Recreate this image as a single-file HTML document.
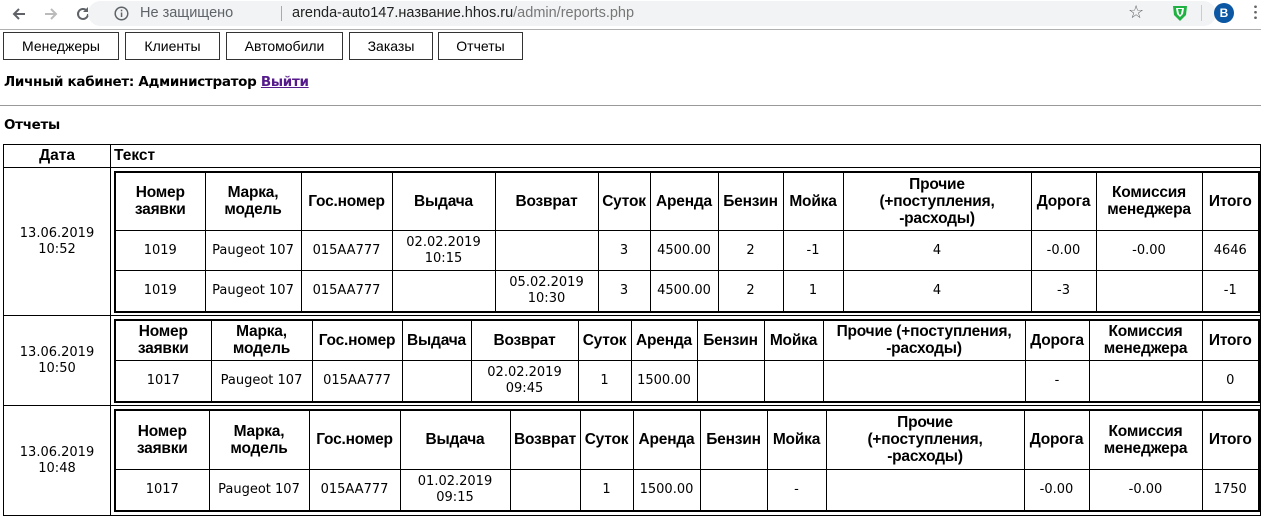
<!DOCTYPE html>
<html><head><meta charset="utf-8"><style>
*{box-sizing:border-box}
body{margin:0;width:1261px;height:514px;overflow:hidden;background:#fff;font-family:"DejaVu Sans",Verdana,sans-serif;color:#000;position:relative}
.bar{position:absolute;left:0;top:0;width:1261px;height:30px;background:#fff;border-bottom:1px solid #b0b0b0}
.url{position:absolute;left:88px;top:1px;width:1128px;height:25px;background:#f1f3f4;border-radius:13px;font-family:"Liberation Sans",sans-serif;font-size:14.5px;line-height:25px;color:#222}
.ab{position:absolute;font-family:"Liberation Sans",sans-serif}
.btn{position:absolute;top:32px;height:28px;border:1px solid #333;background:#fff;font-family:"Liberation Sans",sans-serif;font-size:14px;line-height:26px;text-align:center}
.t{position:absolute;font-family:"DejaVu Sans",sans-serif;font-weight:bold;font-size:13.5px;letter-spacing:-0.3px}
table{border-collapse:collapse;table-layout:fixed}
.outer{position:absolute;left:3px;top:144px;width:1258px;border:1px solid #000}
.outer>tbody>tr>td,.outer>tbody>tr>th{border:1px solid #000;padding:0}
.outer th{font-family:"Liberation Sans",sans-serif;font-size:15.5px;font-weight:bold;height:23px}
.dt{text-align:center;font-size:13px;line-height:16px}
.in{width:1144px;margin:2px 3px 2px 3px;border:2px solid #000}
.in td,.in th{border:1px solid #000;text-align:center;padding:0;font-size:13px;line-height:16px}
.in th{font-family:"Liberation Sans",sans-serif;font-size:15.5px;line-height:17px;font-weight:bold;height:auto;letter-spacing:-0.2px}
</style></head><body>
<div class="bar">
<svg class="ab" style="left:11px;top:6px" width="16" height="16" viewBox="0 0 16 16"><path d="M14 8H3M8 3L3 8l5 5" fill="none" stroke="#5f6368" stroke-width="2"/></svg>
<svg class="ab" style="left:43px;top:6px" width="16" height="16" viewBox="0 0 16 16"><path d="M2 8h11M8 3l5 5-5 5" fill="none" stroke="#bbb" stroke-width="2"/></svg>
<svg class="ab" style="left:74px;top:5px" width="18" height="18" viewBox="0 0 18 18"><path d="M14 9a5 5 0 1 1-1.5-3.6" fill="none" stroke="#5f6368" stroke-width="2"/><path d="M14 2v5h-5z" fill="#5f6368"/></svg>
<div class="url"><svg style="position:absolute;left:26px;top:5px" width="15" height="15"><circle cx="7.5" cy="7.5" r="6.3" fill="none" stroke="#5f6368" stroke-width="1.5"/><rect x="6.8" y="6.5" width="1.5" height="4.5" fill="#5f6368"/><rect x="6.8" y="3.7" width="1.5" height="1.6" fill="#5f6368"/></svg><span style="position:absolute;left:52px;color:#5f6368">Не защищено</span><span style="position:absolute;left:193px;top:5px;width:1px;height:15px;background:#aaa"></span><span style="position:absolute;left:204px">arenda-auto147.название.hhos.ru<span style="color:#777">/admin/reports.php</span></span><span style="position:absolute;left:1040px;top:-1px;font-size:18px;color:#5f6368">☆</span></div>
<svg class="ab" style="left:1172px;top:4px" width="16" height="18" viewBox="0 0 16 18"><path d="M1 2h14l-1 9-6 6-6-6z" fill="#1fb141"/><path d="M4 4h8l-1 6-3 3-3-3z" fill="#fff"/><path d="M6 5h4l-1 5-1 1-1-1z" fill="#1fb141"/></svg>
<div class="ab" style="left:1201px;top:5px;width:1px;height:16px;background:#ccc"></div>
<div class="ab" style="left:1214px;top:3px;width:20px;height:20px;border-radius:50%;background:#0b57a4;color:#fff;font-size:12px;line-height:20px;text-align:center;font-weight:bold">B</div>
<div class="ab" style="left:1254px;top:4px;width:3px;height:16px;background:radial-gradient(circle,#666 1.2px,transparent 1.5px) 0 0/3px 5.5px"></div>
</div>
<div class="btn" style="left:3px;width:116px">Менеджеры</div>
<div class="btn" style="left:125px;width:95px">Клиенты</div>
<div class="btn" style="left:226px;width:117px">Автомобили</div>
<div class="btn" style="left:349px;width:84px">Заказы</div>
<div class="btn" style="left:438px;width:85px">Отчеты</div>
<div class="t" style="left:4px;top:74px">Личный кабинет: Администратор <span style="color:#551a8b;text-decoration:underline">Выйти</span></div>
<div style="position:absolute;left:0;top:105px;width:1261px;height:1px;background:#999"></div>
<div class="t" style="left:4px;top:117px">Отчеты</div>
<table class="outer"><colgroup><col style="width:107px"><col></colgroup><tbody>
<tr><th>Дата</th><th style="text-align:left;padding-left:3px">Текст</th></tr>
<tr style="height:148px"><td class="dt">13.06.2019<br>10:52</td><td>
<table class="in"><colgroup><col style="width:90px"><col style="width:96px"><col style="width:91px"><col style="width:103px"><col style="width:103px"><col style="width:52px"><col style="width:68px"><col style="width:65px"><col style="width:60px"><col style="width:188px"><col style="width:65px"><col style="width:106px"><col style="width:57px"></colgroup>
<tr style="height:59px"><th>Номер<br>заявки</th><th>Марка,<br>модель</th><th>Гос.номер</th><th>Выдача</th><th>Возврат</th><th>Суток</th><th>Аренда</th><th>Бензин</th><th>Мойка</th><th>Прочие<br>(+поступления,<br>-расходы)</th><th>Дорога</th><th>Комиссия<br>менеджера</th><th>Итого</th></tr>
<tr style="height:40px"><td>1019</td><td>Paugeot 107</td><td>015AA777</td><td>02.02.2019<br>10:15</td><td></td><td>3</td><td>4500.00</td><td>2</td><td>-1</td><td>4</td><td>-0.00</td><td>-0.00</td><td>4646</td></tr>
<tr style="height:41px"><td>1019</td><td>Paugeot 107</td><td>015AA777</td><td></td><td>05.02.2019<br>10:30</td><td>3</td><td>4500.00</td><td>2</td><td>1</td><td>4</td><td>-3</td><td></td><td>-1</td></tr>
</table></td></tr>
<tr style="height:90px"><td class="dt">13.06.2019<br>10:50</td><td>
<table class="in"><colgroup><col style="width:96px"><col style="width:101px"><col style="width:90px"><col style="width:69px"><col style="width:107px"><col style="width:53px"><col style="width:66px"><col style="width:67px"><col style="width:59px"><col style="width:202px"><col style="width:64px"><col style="width:113px"><col style="width:57px"></colgroup>
<tr style="height:41px"><th>Номер<br>заявки</th><th>Марка,<br>модель</th><th>Гос.номер</th><th>Выдача</th><th>Возврат</th><th>Суток</th><th>Аренда</th><th>Бензин</th><th>Мойка</th><th>Прочие (+поступления,<br>-расходы)</th><th>Дорога</th><th>Комиссия<br>менеджера</th><th>Итого</th></tr>
<tr style="height:41px"><td>1017</td><td>Paugeot 107</td><td>015AA777</td><td></td><td>02.02.2019<br>09:45</td><td>1</td><td>1500.00</td><td></td><td></td><td></td><td>-</td><td></td><td>0</td></tr>
</table></td></tr>
<tr style="height:110px"><td class="dt">13.06.2019<br>10:48</td><td>
<table class="in"><colgroup><col style="width:94px"><col style="width:100px"><col style="width:91px"><col style="width:110px"><col style="width:70px"><col style="width:53px"><col style="width:67px"><col style="width:67px"><col style="width:59px"><col style="width:198px"><col style="width:65px"><col style="width:113px"><col style="width:57px"></colgroup>
<tr style="height:59px"><th>Номер<br>заявки</th><th>Марка,<br>модель</th><th>Гос.номер</th><th>Выдача</th><th>Возврат</th><th>Суток</th><th>Аренда</th><th>Бензин</th><th>Мойка</th><th>Прочие<br>(+поступления,<br>-расходы)</th><th>Дорога</th><th>Комиссия<br>менеджера</th><th>Итого</th></tr>
<tr style="height:42px"><td>1017</td><td>Paugeot 107</td><td>015AA777</td><td>01.02.2019<br>09:15</td><td></td><td>1</td><td>1500.00</td><td></td><td>-</td><td></td><td>-0.00</td><td>-0.00</td><td>1750</td></tr>
</table></td></tr>
</tbody></table>
</body></html>
